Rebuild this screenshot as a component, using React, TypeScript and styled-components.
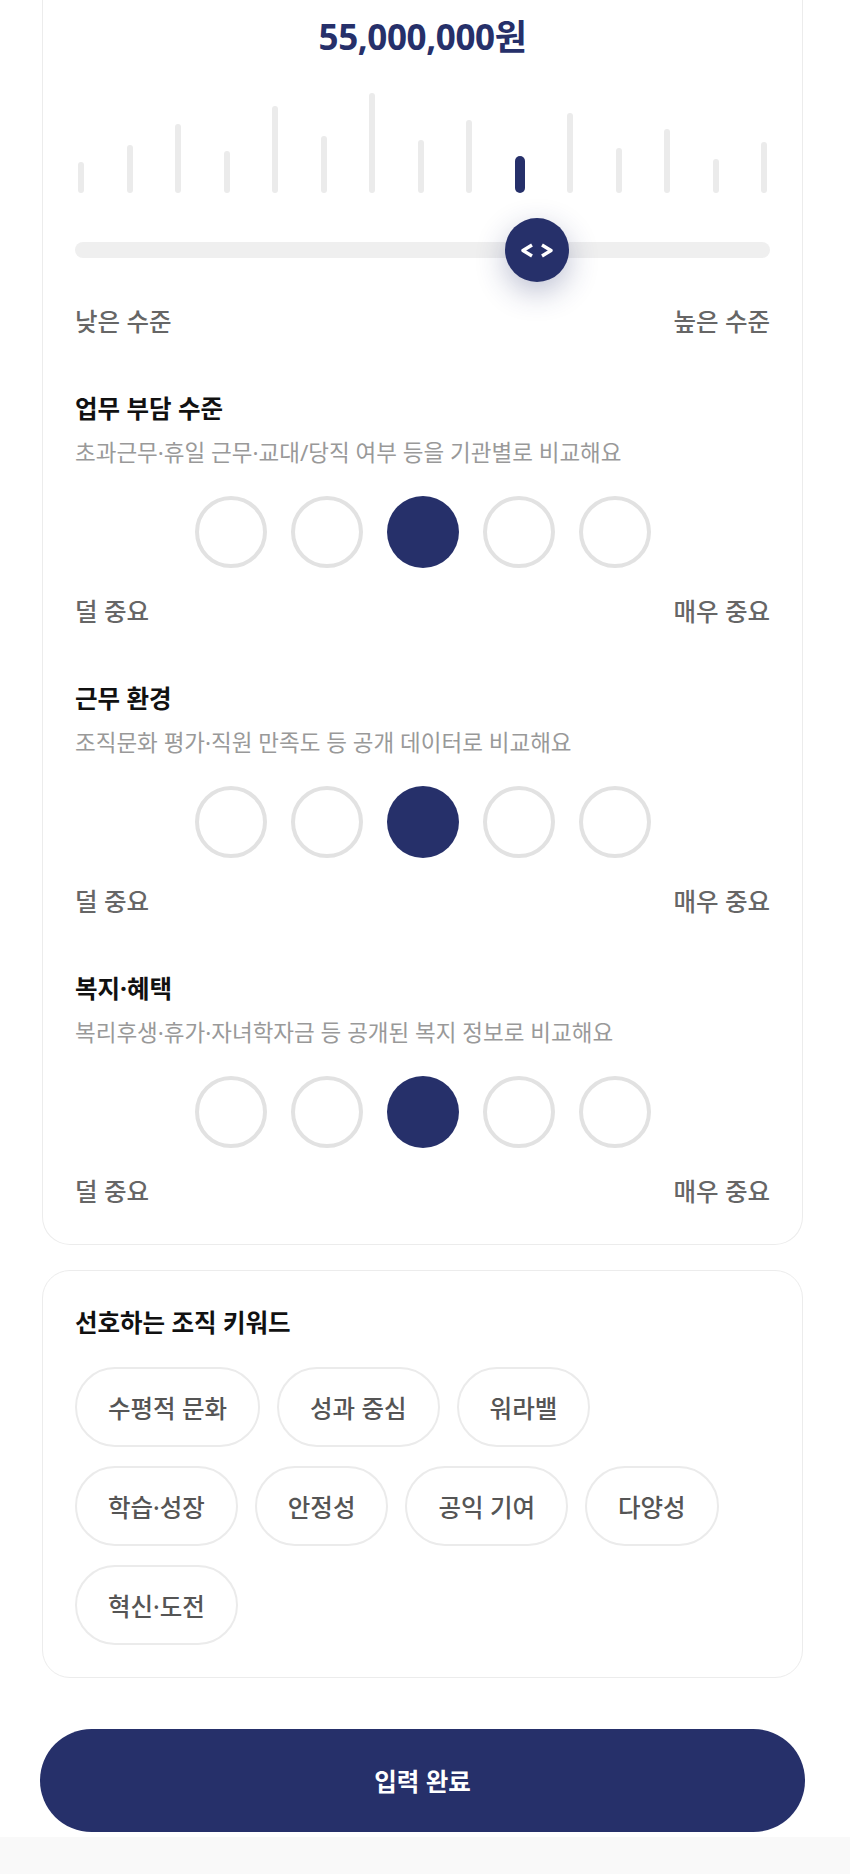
import styled, { createGlobalStyle } from 'styled-components';

const NAVY = '#26306a';

const GlobalStyle = createGlobalStyle`
  html, body {
    margin: 0;
    padding: 0;
    background: #f9f9f9;
  }
  body {
    font-family: "Noto Sans", "Noto Sans CJK KR", sans-serif;
    -webkit-font-smoothing: antialiased;
  }
  * { box-sizing: border-box; }
`;

const bars = [31, 48, 69, 42, 87, 57, 100, 53, 73, 37, 80, 45, 64, 34, 51];
const activeBar = 9;

const sections = [
  {
    title: '업무 부담 수준',
    desc: '초과근무·휴일 근무·교대/당직 여부 등을 기관별로 비교해요',
  },
  {
    title: '근무 환경',
    desc: '조직문화 평가·직원 만족도 등 공개 데이터로 비교해요',
  },
  {
    title: '복지·혜택',
    desc: '복리후생·휴가·자녀학자금 등 공개된 복지 정보로 비교해요',
  },
];

const keywordRows = [
  ['수평적 문화', '성과 중심', '워라밸'],
  ['학습·성장', '안정성', '공익 기여', '다양성'],
  ['혁신·도전'],
];

const ThumbIcon = () => (
  <svg width="34" height="15" viewBox="0 0 34 15" fill="none">
    <polyline points="12,2 3,7.5 12,13" stroke="#fff" strokeWidth="3.4" strokeLinejoin="round" />
    <polyline points="22,2 31,7.5 22,13" stroke="#fff" strokeWidth="3.4" strokeLinejoin="round" />
  </svg>
);

const RatingSection = ({ title, desc, value }: { title: string; desc: string; value: number }) => (
  <Section>
    <SectionTitle>{title}</SectionTitle>
    <SectionDesc>{desc}</SectionDesc>
    <Dots>
      {[0, 1, 2, 3, 4].map((i) => (
        <Dot key={i} $active={i === value} />
      ))}
    </Dots>
    <ScaleLabels>
      <span>덜 중요</span>
      <span>매우 중요</span>
    </ScaleLabels>
  </Section>
);

export default function App() {
  return (
    <>
      <GlobalStyle />
      <Page>
        <TopCard>
          <Amount>55,000,000원</Amount>
          <Bars>
            {bars.map((h, i) => (
              <Bar key={i} $active={i === activeBar} style={{ height: h }} />
            ))}
          </Bars>
          <Track>
            <Thumb style={{ left: '66.5%' }}>
              <ThumbIcon />
            </Thumb>
          </Track>
          <ScaleLabels $first>
            <span>낮은 수준</span>
            <span>높은 수준</span>
          </ScaleLabels>
          {sections.map((s) => (
            <RatingSection key={s.title} title={s.title} desc={s.desc} value={2} />
          ))}
        </TopCard>

        <KeywordCard>
          <SectionTitle>선호하는 조직 키워드</SectionTitle>
          <ChipRows>
            {keywordRows.map((row, r) => (
              <ChipRow key={r}>
                {row.map((k) => (
                  <Chip key={k}>{k}</Chip>
                ))}
              </ChipRow>
            ))}
          </ChipRows>
        </KeywordCard>

        <SubmitButton>입력 완료</SubmitButton>
      </Page>
    </>
  );
}

const Page = styled.div`
  background: #fff;
  padding: 0 45px 5px 40px;
  display: flex;
  flex-direction: column;
`;

const Card = styled.div`
  margin: 0 2px;
  background: #fff;
  border: 1px solid #ececec;
  border-radius: 28px;
  padding: 36px 32px 32px;
`;

const TopCard = styled(Card)`
  border-top: none;
  border-radius: 0 0 28px 28px;
  padding: 17px 32px 37px;
`;

const KeywordCard = styled(Card)`
  margin-top: 25px;
`;

const Amount = styled.div`
  text-align: center;
  font-size: 35px;
  line-height: 40px;
  font-weight: 700;
  color: ${NAVY};
  letter-spacing: -0.4px;
`;

const Bars = styled.div`
  margin-top: 36px;
  height: 100px;
  padding: 0 3px;
  display: flex;
  align-items: flex-end;
  justify-content: space-between;
`;

const Bar = styled.div<{ $active?: boolean }>`
  width: ${(p) => (p.$active ? 10 : 6)}px;
  border-radius: 5px;
  background: ${(p) => (p.$active ? NAVY : '#ebebeb')};
`;

const Track = styled.div`
  position: relative;
  margin-top: 49px;
  height: 16px;
  border-radius: 8px;
  background: #efefef;
`;

const Thumb = styled.div`
  position: absolute;
  top: 50%;
  width: 64px;
  height: 64px;
  border-radius: 50%;
  background: ${NAVY};
  transform: translate(-50%, -50%);
  display: flex;
  align-items: center;
  justify-content: center;
  box-shadow: 0 10px 30px rgba(38, 48, 106, 0.3);
`;

const ScaleLabels = styled.div<{ $first?: boolean }>`
  margin-top: ${(p) => (p.$first ? 49 : 29)}px;
  display: flex;
  justify-content: space-between;
  font-size: 24.5px;
  line-height: 30px;
  font-weight: 500;
  color: #666;
`;

const Section = styled.div`
  margin-top: 56px;
`;

const SectionTitle = styled.div`
  font-size: 24.5px;
  line-height: 32px;
  font-weight: 700;
  color: #111;
`;

const SectionDesc = styled.div`
  margin-top: 14px;
  font-size: 22.5px;
  line-height: 28px;
  color: #999;
`;

const Dots = styled.div`
  margin-top: 29px;
  display: flex;
  justify-content: center;
  gap: 24px;
`;

const Dot = styled.div<{ $active?: boolean }>`
  width: 72px;
  height: 72px;
  border-radius: 50%;
  border: ${(p) => (p.$active ? 'none' : '4px solid #e2e2e2')};
  background: ${(p) => (p.$active ? NAVY : '#fff')};
`;

const ChipRows = styled.div`
  margin-top: 28px;
  display: flex;
  flex-direction: column;
  gap: 19px;
`;

const ChipRow = styled.div`
  display: flex;
  gap: 17px;
`;

const Chip = styled.button`
  height: 80px;
  padding: 0 31px;
  border: 2px solid #ebebeb;
  border-radius: 40px;
  background: #fff;
  font-family: inherit;
  font-size: 24.5px;
  font-weight: 500;
  color: #555;
  white-space: nowrap;
`;

const SubmitButton = styled.button`
  margin-top: 51px;
  height: 103px;
  border: none;
  border-radius: 52px;
  background: ${NAVY};
  color: #fff;
  font-family: inherit;
  font-size: 24.5px;
  font-weight: 700;
`;
